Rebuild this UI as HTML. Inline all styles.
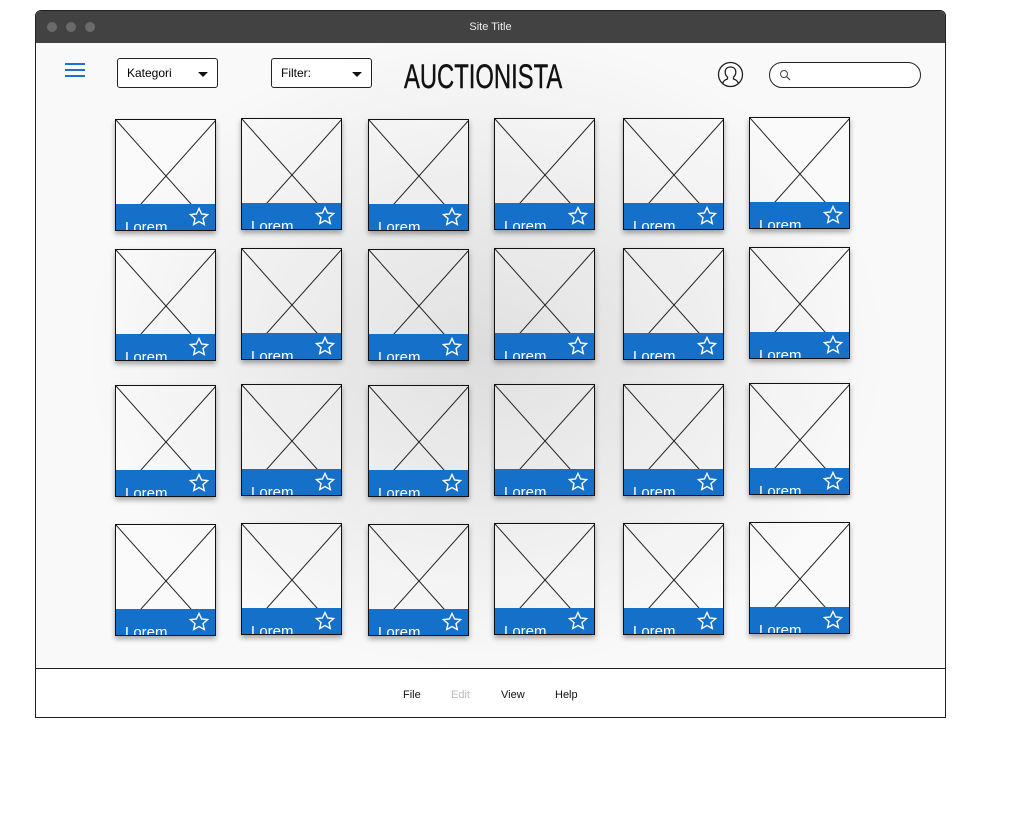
<!DOCTYPE html>
<html><head><meta charset="utf-8"><style>
body{margin:0;width:1010px;height:817px;background:#fff;position:relative;overflow:hidden;font-family:"Liberation Sans",sans-serif}
.win{position:absolute;left:35px;top:10px;width:909px;height:706px;border:1px solid #222;border-radius:6px 6px 0 0;overflow:hidden;background:radial-gradient(ellipse 400px 320px at 450px 340px,#dcdcdc 0%,#ebebeb 50%,#f9f9f9 100%)}
.tb{position:absolute;left:0;top:0;width:100%;height:32px;background:#424242;color:#eee;font-size:11px;text-align:center;line-height:32px}
.dot{position:absolute;top:11px;width:10px;height:10px;border-radius:50%;background:#6a6a6a}
.foot{position:absolute;left:0;top:657px;width:100%;height:49px;background:#fff;border-top:1px solid #222;font-size:11px}
.foot span{position:absolute;top:20px}
.sel{position:absolute;top:47px;width:101px;height:30px;border:1px solid #222;border-radius:3px;background:#fff;font-size:12px;line-height:28px;box-sizing:border-box;padding-left:9px}
.sel i{position:absolute;right:9px;top:13px;border-left:5px solid transparent;border-right:5px solid transparent;border-top:5px solid #111}
.c{position:absolute;width:101px;height:112px;box-sizing:border-box;border:1px solid #111;background:rgba(255,255,255,.15);box-shadow:0 3px 5px rgba(0,0,0,.35);overflow:hidden}
.c svg.x{position:absolute;left:0;top:0}
.b{position:absolute;left:-1px;right:-1px;bottom:-1px;height:27px;background:#1570c9;overflow:hidden}
.b span{position:absolute;left:10px;top:15px;color:#fff;font-size:15px;line-height:18px}
.b svg{position:absolute;left:74px;top:3px}
</style></head><body>
<div class="win">
<div class="tb">Site Title</div>
<div class="dot" style="left:11px"></div><div class="dot" style="left:30px"></div><div class="dot" style="left:49px"></div>
<div style="position:absolute;left:29px;top:52px;width:20px;height:2px;background:#1a73cc;box-shadow:0 6px 0 #1a73cc,0 12px 0 #1a73cc"></div>
<div class="sel" style="left:81px">Kategori<i></i></div>
<div class="sel" style="left:235px">Filter:<i></i></div>
<div style="position:absolute;left:368px;top:46px;font-family:'Liberation Sans Narrow','Liberation Sans',sans-serif;font-size:34px;transform:scaleX(.7);transform-origin:left;color:#111;line-height:40px;-webkit-text-stroke:.4px #111">AUCTIONISTA</div>
<svg style="position:absolute;left:681px;top:50px" width="27" height="27" viewBox="0 0 27 27"><circle cx="13.5" cy="13.5" r="12" fill="#fff" stroke="#222" stroke-width="1.3"/><path d="M5.5 22.5c1-3 3-4 5-4.5v-2c-1.5-1-2.3-3-2.3-5 0-3 2-5 5.3-5s5.3 2 5.3 5c0 2-.8 4-2.3 5v2c2 .5 4 1.5 5 4.5" fill="none" stroke="#222" stroke-width="1.3"/></svg>
<div style="position:absolute;left:733px;top:51px;width:150px;height:24px;border:1px solid #222;border-radius:13px;background:#fff"><svg style="position:absolute;left:9px;top:6px" width="12" height="12"><circle cx="5" cy="5" r="3.5" fill="none" stroke="#444" stroke-width="1"/><line x1="7.5" y1="7.5" x2="11" y2="11" stroke="#444" stroke-width="1.2"/></svg></div>
<div class="foot"><span style="left:367px;color:#111">File</span><span style="left:415px;color:#bbb">Edit</span><span style="left:465px;color:#111">View</span><span style="left:519px;color:#111">Help</span></div>
</div>

<div style="position:absolute;left:0;top:0">
<div class="c" style="left:115px;top:119px"><svg class="x" width="101" height="112"><line x1="0" y1="0" x2="100" y2="112" stroke="#222"/><line x1="100" y1="0" x2="0" y2="112" stroke="#222"/></svg><div class="b"><span>Lorem</span><svg width="20" height="20"><polygon points="10,1.5 12.6,7 18.5,7.6 14,11.6 15.3,17.5 10,14.5 4.7,17.5 6,11.6 1.5,7.6 7.4,7" fill="none" stroke="#fff" stroke-width="1.4"/></svg></div></div>
<div class="c" style="left:241px;top:118px"><svg class="x" width="101" height="112"><line x1="0" y1="0" x2="100" y2="112" stroke="#222"/><line x1="100" y1="0" x2="0" y2="112" stroke="#222"/></svg><div class="b"><span>Lorem</span><svg width="20" height="20"><polygon points="10,1.5 12.6,7 18.5,7.6 14,11.6 15.3,17.5 10,14.5 4.7,17.5 6,11.6 1.5,7.6 7.4,7" fill="none" stroke="#fff" stroke-width="1.4"/></svg></div></div>
<div class="c" style="left:368px;top:119px"><svg class="x" width="101" height="112"><line x1="0" y1="0" x2="100" y2="112" stroke="#222"/><line x1="100" y1="0" x2="0" y2="112" stroke="#222"/></svg><div class="b"><span>Lorem</span><svg width="20" height="20"><polygon points="10,1.5 12.6,7 18.5,7.6 14,11.6 15.3,17.5 10,14.5 4.7,17.5 6,11.6 1.5,7.6 7.4,7" fill="none" stroke="#fff" stroke-width="1.4"/></svg></div></div>
<div class="c" style="left:494px;top:118px"><svg class="x" width="101" height="112"><line x1="0" y1="0" x2="100" y2="112" stroke="#222"/><line x1="100" y1="0" x2="0" y2="112" stroke="#222"/></svg><div class="b"><span>Lorem</span><svg width="20" height="20"><polygon points="10,1.5 12.6,7 18.5,7.6 14,11.6 15.3,17.5 10,14.5 4.7,17.5 6,11.6 1.5,7.6 7.4,7" fill="none" stroke="#fff" stroke-width="1.4"/></svg></div></div>
<div class="c" style="left:623px;top:118px"><svg class="x" width="101" height="112"><line x1="0" y1="0" x2="100" y2="112" stroke="#222"/><line x1="100" y1="0" x2="0" y2="112" stroke="#222"/></svg><div class="b"><span>Lorem</span><svg width="20" height="20"><polygon points="10,1.5 12.6,7 18.5,7.6 14,11.6 15.3,17.5 10,14.5 4.7,17.5 6,11.6 1.5,7.6 7.4,7" fill="none" stroke="#fff" stroke-width="1.4"/></svg></div></div>
<div class="c" style="left:749px;top:117px"><svg class="x" width="101" height="112"><line x1="0" y1="0" x2="100" y2="112" stroke="#222"/><line x1="100" y1="0" x2="0" y2="112" stroke="#222"/></svg><div class="b"><span>Lorem</span><svg width="20" height="20"><polygon points="10,1.5 12.6,7 18.5,7.6 14,11.6 15.3,17.5 10,14.5 4.7,17.5 6,11.6 1.5,7.6 7.4,7" fill="none" stroke="#fff" stroke-width="1.4"/></svg></div></div>
<div class="c" style="left:115px;top:249px"><svg class="x" width="101" height="112"><line x1="0" y1="0" x2="100" y2="112" stroke="#222"/><line x1="100" y1="0" x2="0" y2="112" stroke="#222"/></svg><div class="b"><span>Lorem</span><svg width="20" height="20"><polygon points="10,1.5 12.6,7 18.5,7.6 14,11.6 15.3,17.5 10,14.5 4.7,17.5 6,11.6 1.5,7.6 7.4,7" fill="none" stroke="#fff" stroke-width="1.4"/></svg></div></div>
<div class="c" style="left:241px;top:248px"><svg class="x" width="101" height="112"><line x1="0" y1="0" x2="100" y2="112" stroke="#222"/><line x1="100" y1="0" x2="0" y2="112" stroke="#222"/></svg><div class="b"><span>Lorem</span><svg width="20" height="20"><polygon points="10,1.5 12.6,7 18.5,7.6 14,11.6 15.3,17.5 10,14.5 4.7,17.5 6,11.6 1.5,7.6 7.4,7" fill="none" stroke="#fff" stroke-width="1.4"/></svg></div></div>
<div class="c" style="left:368px;top:249px"><svg class="x" width="101" height="112"><line x1="0" y1="0" x2="100" y2="112" stroke="#222"/><line x1="100" y1="0" x2="0" y2="112" stroke="#222"/></svg><div class="b"><span>Lorem</span><svg width="20" height="20"><polygon points="10,1.5 12.6,7 18.5,7.6 14,11.6 15.3,17.5 10,14.5 4.7,17.5 6,11.6 1.5,7.6 7.4,7" fill="none" stroke="#fff" stroke-width="1.4"/></svg></div></div>
<div class="c" style="left:494px;top:248px"><svg class="x" width="101" height="112"><line x1="0" y1="0" x2="100" y2="112" stroke="#222"/><line x1="100" y1="0" x2="0" y2="112" stroke="#222"/></svg><div class="b"><span>Lorem</span><svg width="20" height="20"><polygon points="10,1.5 12.6,7 18.5,7.6 14,11.6 15.3,17.5 10,14.5 4.7,17.5 6,11.6 1.5,7.6 7.4,7" fill="none" stroke="#fff" stroke-width="1.4"/></svg></div></div>
<div class="c" style="left:623px;top:248px"><svg class="x" width="101" height="112"><line x1="0" y1="0" x2="100" y2="112" stroke="#222"/><line x1="100" y1="0" x2="0" y2="112" stroke="#222"/></svg><div class="b"><span>Lorem</span><svg width="20" height="20"><polygon points="10,1.5 12.6,7 18.5,7.6 14,11.6 15.3,17.5 10,14.5 4.7,17.5 6,11.6 1.5,7.6 7.4,7" fill="none" stroke="#fff" stroke-width="1.4"/></svg></div></div>
<div class="c" style="left:749px;top:247px"><svg class="x" width="101" height="112"><line x1="0" y1="0" x2="100" y2="112" stroke="#222"/><line x1="100" y1="0" x2="0" y2="112" stroke="#222"/></svg><div class="b"><span>Lorem</span><svg width="20" height="20"><polygon points="10,1.5 12.6,7 18.5,7.6 14,11.6 15.3,17.5 10,14.5 4.7,17.5 6,11.6 1.5,7.6 7.4,7" fill="none" stroke="#fff" stroke-width="1.4"/></svg></div></div>
<div class="c" style="left:115px;top:385px"><svg class="x" width="101" height="112"><line x1="0" y1="0" x2="100" y2="112" stroke="#222"/><line x1="100" y1="0" x2="0" y2="112" stroke="#222"/></svg><div class="b"><span>Lorem</span><svg width="20" height="20"><polygon points="10,1.5 12.6,7 18.5,7.6 14,11.6 15.3,17.5 10,14.5 4.7,17.5 6,11.6 1.5,7.6 7.4,7" fill="none" stroke="#fff" stroke-width="1.4"/></svg></div></div>
<div class="c" style="left:241px;top:384px"><svg class="x" width="101" height="112"><line x1="0" y1="0" x2="100" y2="112" stroke="#222"/><line x1="100" y1="0" x2="0" y2="112" stroke="#222"/></svg><div class="b"><span>Lorem</span><svg width="20" height="20"><polygon points="10,1.5 12.6,7 18.5,7.6 14,11.6 15.3,17.5 10,14.5 4.7,17.5 6,11.6 1.5,7.6 7.4,7" fill="none" stroke="#fff" stroke-width="1.4"/></svg></div></div>
<div class="c" style="left:368px;top:385px"><svg class="x" width="101" height="112"><line x1="0" y1="0" x2="100" y2="112" stroke="#222"/><line x1="100" y1="0" x2="0" y2="112" stroke="#222"/></svg><div class="b"><span>Lorem</span><svg width="20" height="20"><polygon points="10,1.5 12.6,7 18.5,7.6 14,11.6 15.3,17.5 10,14.5 4.7,17.5 6,11.6 1.5,7.6 7.4,7" fill="none" stroke="#fff" stroke-width="1.4"/></svg></div></div>
<div class="c" style="left:494px;top:384px"><svg class="x" width="101" height="112"><line x1="0" y1="0" x2="100" y2="112" stroke="#222"/><line x1="100" y1="0" x2="0" y2="112" stroke="#222"/></svg><div class="b"><span>Lorem</span><svg width="20" height="20"><polygon points="10,1.5 12.6,7 18.5,7.6 14,11.6 15.3,17.5 10,14.5 4.7,17.5 6,11.6 1.5,7.6 7.4,7" fill="none" stroke="#fff" stroke-width="1.4"/></svg></div></div>
<div class="c" style="left:623px;top:384px"><svg class="x" width="101" height="112"><line x1="0" y1="0" x2="100" y2="112" stroke="#222"/><line x1="100" y1="0" x2="0" y2="112" stroke="#222"/></svg><div class="b"><span>Lorem</span><svg width="20" height="20"><polygon points="10,1.5 12.6,7 18.5,7.6 14,11.6 15.3,17.5 10,14.5 4.7,17.5 6,11.6 1.5,7.6 7.4,7" fill="none" stroke="#fff" stroke-width="1.4"/></svg></div></div>
<div class="c" style="left:749px;top:383px"><svg class="x" width="101" height="112"><line x1="0" y1="0" x2="100" y2="112" stroke="#222"/><line x1="100" y1="0" x2="0" y2="112" stroke="#222"/></svg><div class="b"><span>Lorem</span><svg width="20" height="20"><polygon points="10,1.5 12.6,7 18.5,7.6 14,11.6 15.3,17.5 10,14.5 4.7,17.5 6,11.6 1.5,7.6 7.4,7" fill="none" stroke="#fff" stroke-width="1.4"/></svg></div></div>
<div class="c" style="left:115px;top:524px"><svg class="x" width="101" height="112"><line x1="0" y1="0" x2="100" y2="112" stroke="#222"/><line x1="100" y1="0" x2="0" y2="112" stroke="#222"/></svg><div class="b"><span>Lorem</span><svg width="20" height="20"><polygon points="10,1.5 12.6,7 18.5,7.6 14,11.6 15.3,17.5 10,14.5 4.7,17.5 6,11.6 1.5,7.6 7.4,7" fill="none" stroke="#fff" stroke-width="1.4"/></svg></div></div>
<div class="c" style="left:241px;top:523px"><svg class="x" width="101" height="112"><line x1="0" y1="0" x2="100" y2="112" stroke="#222"/><line x1="100" y1="0" x2="0" y2="112" stroke="#222"/></svg><div class="b"><span>Lorem</span><svg width="20" height="20"><polygon points="10,1.5 12.6,7 18.5,7.6 14,11.6 15.3,17.5 10,14.5 4.7,17.5 6,11.6 1.5,7.6 7.4,7" fill="none" stroke="#fff" stroke-width="1.4"/></svg></div></div>
<div class="c" style="left:368px;top:524px"><svg class="x" width="101" height="112"><line x1="0" y1="0" x2="100" y2="112" stroke="#222"/><line x1="100" y1="0" x2="0" y2="112" stroke="#222"/></svg><div class="b"><span>Lorem</span><svg width="20" height="20"><polygon points="10,1.5 12.6,7 18.5,7.6 14,11.6 15.3,17.5 10,14.5 4.7,17.5 6,11.6 1.5,7.6 7.4,7" fill="none" stroke="#fff" stroke-width="1.4"/></svg></div></div>
<div class="c" style="left:494px;top:523px"><svg class="x" width="101" height="112"><line x1="0" y1="0" x2="100" y2="112" stroke="#222"/><line x1="100" y1="0" x2="0" y2="112" stroke="#222"/></svg><div class="b"><span>Lorem</span><svg width="20" height="20"><polygon points="10,1.5 12.6,7 18.5,7.6 14,11.6 15.3,17.5 10,14.5 4.7,17.5 6,11.6 1.5,7.6 7.4,7" fill="none" stroke="#fff" stroke-width="1.4"/></svg></div></div>
<div class="c" style="left:623px;top:523px"><svg class="x" width="101" height="112"><line x1="0" y1="0" x2="100" y2="112" stroke="#222"/><line x1="100" y1="0" x2="0" y2="112" stroke="#222"/></svg><div class="b"><span>Lorem</span><svg width="20" height="20"><polygon points="10,1.5 12.6,7 18.5,7.6 14,11.6 15.3,17.5 10,14.5 4.7,17.5 6,11.6 1.5,7.6 7.4,7" fill="none" stroke="#fff" stroke-width="1.4"/></svg></div></div>
<div class="c" style="left:749px;top:522px"><svg class="x" width="101" height="112"><line x1="0" y1="0" x2="100" y2="112" stroke="#222"/><line x1="100" y1="0" x2="0" y2="112" stroke="#222"/></svg><div class="b"><span>Lorem</span><svg width="20" height="20"><polygon points="10,1.5 12.6,7 18.5,7.6 14,11.6 15.3,17.5 10,14.5 4.7,17.5 6,11.6 1.5,7.6 7.4,7" fill="none" stroke="#fff" stroke-width="1.4"/></svg></div></div>
</div>
</body></html>
